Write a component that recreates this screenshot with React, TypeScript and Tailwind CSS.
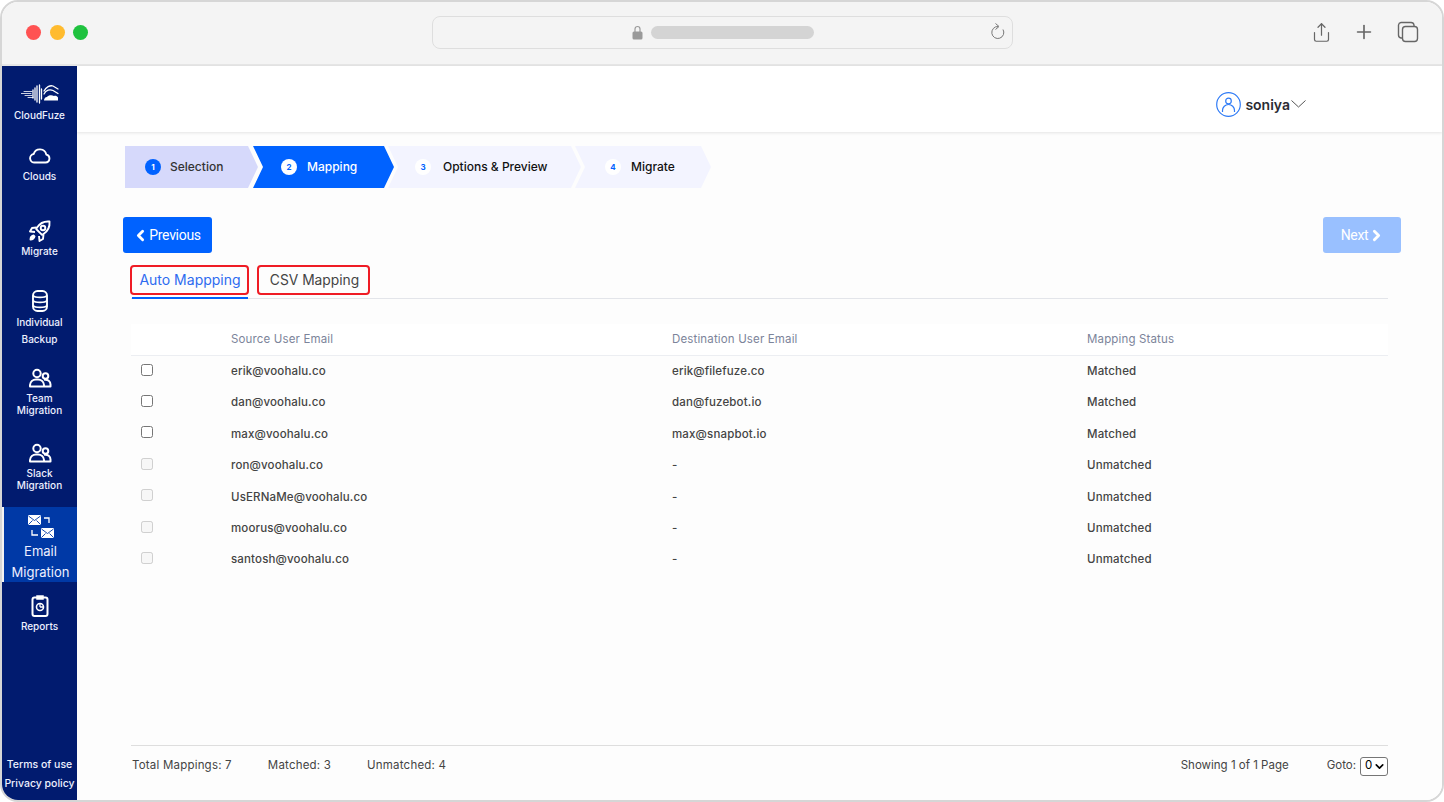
import React from 'react';
import { ChevronLeft, ChevronRight, ChevronDown, Plus, Share } from 'lucide-react';

const ROWS = [
  { source: 'erik@voohalu.co', dest: 'erik@filefuze.co', status: 'Matched' },
  { source: 'dan@voohalu.co', dest: 'dan@fuzebot.io', status: 'Matched' },
  { source: 'max@voohalu.co', dest: 'max@snapbot.io', status: 'Matched' },
  { source: 'ron@voohalu.co', dest: '-', status: 'Unmatched' },
  { source: 'UsERNaMe@voohalu.co', dest: '-', status: 'Unmatched' },
  { source: 'moorus@voohalu.co', dest: '-', status: 'Unmatched' },
  { source: 'santosh@voohalu.co', dest: '-', status: 'Unmatched' },
];

const STEP_BASE = 'flex h-[42px] items-center text-[12px] font-medium';
const CLIP_FIRST = '[clip-path:polygon(0_0,calc(100%-10px)_0,100%_50%,calc(100%-10px)_100%,0_100%)]';
const CLIP_NEXT = '[clip-path:polygon(0_0,calc(100%-10px)_0,100%_50%,calc(100%-10px)_100%,0_100%,10px_50%)]';

const LogoIcon = () => (
  <svg width="38" height="20" viewBox="0 0 38 20" fill="none" stroke="white" strokeWidth="1.100" strokeLinecap="round">
    <path d="M0 9.500h10M3 7.500h8M4 11.500h7M7 13.500h5" strokeWidth="0.800" />
    <path d="M12 6v8M14 4v12M16 2v16M18.500 1v18M20.500 5v10" strokeWidth="1.300" />
    <path d="M23 7c2-4 6-6 9-5l5 3M23 10c2-4 6-5 9-3.500l5 3" strokeWidth="1.300" />
    <path d="M23 16.500h14v-3c-1-2-3-2-4-1.500c-2-1.500-6-1-7 1c-2 0-3 2-3 3.500z" fill="white" stroke="none" />
  </svg>
);

const CloudIcon = () => (
  <svg width="22" height="18" viewBox="0 0 22 18" fill="none" stroke="white" strokeWidth="1.900" strokeLinejoin="round">
    <path d="M6 16.500h10.500a4 4 0 0 0 .8-7.900a6.500 6.500 0 0 0-12.600-.6a4.300 4.300 0 0 0 1.300 8.500z" />
  </svg>
);

const RocketIcon = () => (
  <svg width="24" height="24" viewBox="0 0 24 24" fill="none" stroke="white" strokeWidth="1.900" strokeLinejoin="round">
    <path d="M21.500 2.500c-5.500-.5-9.500 1.500-12.500 6l-.8 1.500l5.800 5.800l1.500-.8c4.500-3 6.500-7 6-12.500z" />
    <circle cx="15" cy="9" r="2.300" />
    <path d="M8.500 8.500L4 9L2 12.500L7 13M15.500 15.500L15 20L11.500 22L11 17" />
    <path d="M5.500 16.500c-1.800.5-3 2.200-3 4c1.800 0 3.500-1.200 4-3z" fill="white" />
  </svg>
);

const DatabaseIcon = () => (
  <svg width="16" height="22" viewBox="0 0 16 22" fill="none" stroke="white" strokeWidth="1.900">
    <rect x="1" y="1" width="14" height="20" rx="4.500" />
    <path d="M1 5.500c2 2.500 12 2.500 14 0M1 10.500c2 2.500 12 2.500 14 0M1 15.500c2 2.500 12 2.500 14 0" />
  </svg>
);

const PeopleIcon = () => (
  <svg width="24" height="24" viewBox="0 0 24 24" fill="none" stroke="white" strokeWidth="2">
    <circle cx="9" cy="7.500" r="3.700" />
    <circle cx="17.500" cy="10" r="2.800" />
    <path d="M2 20.500v-1.500a6 6 0 0 1 6-5.500h2a6 6 0 0 1 6 5.500v1.500zM16 13.800c4-.8 6.500 1.700 6.500 4.700v2h-6.500" strokeLinejoin="round" />
  </svg>
);

const EmailIcon = () => (
  <svg width="26" height="24" viewBox="0 0 26 24" fill="none">
    <rect x="0" y="0" width="13" height="10" rx="1" fill="white" />
    <path d="M0.500 1l6 4.500l6-4.500M0.500 9.500l4-4M12.500 9.500l-4-4" stroke="#0039a6" strokeWidth="0.900" />
    <rect x="13" y="13" width="13" height="10" rx="1" fill="white" />
    <path d="M13.500 14l6 4.500l6-4.500M13.500 22.500l4-4M25.500 22.500l-4-4" stroke="#0039a6" strokeWidth="0.900" />
    <path d="M16 3h5v5M10 20H4v-5" stroke="white" strokeWidth="1.300" />
  </svg>
);

const ReportIcon = () => (
  <svg width="24" height="24" viewBox="0 0 24 24" fill="none" stroke="white" strokeWidth="2">
    <rect x="4.500" y="3.500" width="15" height="18.500" rx="2" />
    <path d="M9 2h6v3H9z" fill="white" strokeWidth="1.500" />
    <circle cx="12" cy="13" r="3.500" strokeWidth="1.600" />
    <path d="M12 13V9.500M12 13h3.500" strokeWidth="1.300" />
  </svg>
);

const NavItem = ({ icon, lines, className, textClass }: { icon: React.ReactNode; lines: string[]; className: string; textClass: string }) => (
  <div className={`flex flex-col items-center ${className}`}>
    <div className="flex h-[24px] items-center justify-center">{icon}</div>
    <div className={`text-center text-[#eef0ff] ${textClass}`}>
      {lines.map(l => <div key={l}>{l}</div>)}
    </div>
  </div>
);

const Sidebar = () => (
  <aside className="flex h-full w-[75px] shrink-0 flex-col bg-[#011b6f] font-['Inter',sans-serif] font-medium">
    <NavItem icon={<LogoIcon />} lines={['CloudFuze']} className="h-[64px] pt-[16px]" textClass="mt-[2px] text-[10px] leading-[14px]" />
    <NavItem icon={<CloudIcon />} lines={['Clouds']} className="h-[70px] pt-[13px]" textClass="mt-[2px] text-[10px] leading-[14px]" />
    <NavItem icon={<RocketIcon />} lines={['Migrate']} className="h-[76px] pt-[19px]" textClass="mt-[1px] text-[10px] leading-[14px]" />
    <NavItem icon={<DatabaseIcon />} lines={['Individual', 'Backup']} className="h-[75px] pt-[13px]" textClass="mt-[1px] text-[10px] leading-[17px]" />
    <NavItem icon={<PeopleIcon />} lines={['Team', 'Migration']} className="h-[80px] pt-[15px]" textClass="mt-[2px] text-[10px] leading-[12px]" />
    <NavItem icon={<PeopleIcon />} lines={['Slack', 'Migration']} className="h-[76px] pt-[10px]" textClass="mt-[2px] text-[10px] leading-[12px]" />
    <NavItem icon={<EmailIcon />} lines={['Email', 'Migration']} className="h-[75px] border-l-[2px] border-[#f2f2f2] bg-[#0039a6] pt-[8px]" textClass="mt-[2px] text-[13px] leading-[21px] font-normal" />
    <NavItem icon={<ReportIcon />} lines={['Reports']} className="h-[70px] pt-[12px]" textClass="mt-[1px] text-[10px] leading-[14px]" />
    <div className="mt-auto pb-[7px] text-center text-[10.500px] leading-[19px] text-[#eef0ff]">
      <div>Terms of use</div>
      <div>Privacy policy</div>
    </div>
  </aside>
);

const BrowserBar = () => (
  <div className="flex h-[64px] shrink-0 items-center border-b-[2px] border-[#e6e6e6] bg-[#f4f4f4] pb-[2px]">
    <div className="flex w-[430px] shrink-0 items-center gap-[8.500px] pl-[24px]">
      <span className="h-[15px] w-[15px] rounded-full bg-[#ff5252]" />
      <span className="h-[15px] w-[15px] rounded-full bg-[#ffbb2e]" />
      <span className="h-[15px] w-[15px] rounded-full bg-[#1fc23f]" />
    </div>
    <div className="flex h-[33px] w-[581px] shrink-0 items-center rounded-[8px] border border-[#dedede] pl-[199px] pr-[7px]">
      <svg width="11" height="15" viewBox="0 0 11 15" fill="none">
        <path d="M3 7V4a2.500 2.500 0 0 1 5 0v3" stroke="#9a9a9a" strokeWidth="1.200" />
        <rect x="0.500" y="6.500" width="10" height="8" rx="1.500" fill="#9a9a9a" />
      </svg>
      <span className="ml-[8px] h-[13px] w-[163px] rounded-full bg-[#d4d4d4]" />
      <svg className="ml-auto" width="16" height="20" viewBox="0 0 16 20" fill="none" stroke="#777" strokeWidth="1">
        <path d="M9 4.500a6 6 0 1 0 5 3" />
        <path d="M6.500 1.500L10 4.500L6.500 7.500" />
      </svg>
    </div>
    <div className="flex flex-1 items-center pl-[298px] text-[#666]">
      <Share size={21} strokeWidth={1.400} />
      <Plus size={22} strokeWidth={1.800} className="ml-[21px]" />
      <svg className="ml-[22px]" width="22" height="22" viewBox="0 0 22 22" fill="none" stroke="#666" strokeWidth="1.400">
        <rect x="5.500" y="5.500" width="15" height="15" rx="3" />
        <path d="M5.500 17H4a3 3 0 0 1-2.500-3V4A3 3 0 0 1 4 1.500h10A3 3 0 0 1 17 4v1.500" />
      </svg>
    </div>
  </div>
);

const Badge = ({ n, active }: { n: number; active?: boolean }) => (
  <span className={`flex h-[16px] w-[16px] shrink-0 items-center justify-center rounded-full text-[8px] font-bold ${active ? 'bg-[#0062ff] text-white' : 'bg-white text-[#0062ff]'}`}>
    {n}
  </span>
);

const Stepper = () => (
  <div className="flex font-['Inter',sans-serif]">
    <div className={`${STEP_BASE} ${CLIP_FIRST} w-[133px] gap-[9px] bg-[#d6d9fb] pl-[20px] text-[#333]`}>
      <Badge n={1} active /> Selection
    </div>
    <div className={`${STEP_BASE} ${CLIP_NEXT} -ml-[5px] w-[141px] gap-[10px] bg-[#0062ff] pl-[28px] text-white`}>
      <Badge n={2} /> Mapping
    </div>
    <div className={`${STEP_BASE} ${CLIP_NEXT} -ml-[6px] w-[193px] gap-[12px] bg-[#f3f4ff] pl-[27px] text-[11.800px] text-[#111]`}>
      <Badge n={3} /> Options &amp; Preview
    </div>
    <div className={`${STEP_BASE} ${CLIP_NEXT} -ml-[6px] w-[136px] gap-[10px] bg-[#f3f4ff] pl-[30px] text-[#111]`}>
      <Badge n={4} /> Migrate
    </div>
  </div>
);

const Tabs = () => (
  <div className="mt-[12px] ml-[6px] mr-[13px] flex gap-[8px] border-b border-[#e3e5ea] font-['Inter',sans-serif] text-[14px]">
    <div className="-ml-[1px] flex flex-col">
      <div className="flex h-[30px] w-[119px] items-center justify-center rounded-[4px] border-[2px] border-[#ef1c25] pb-px pl-px text-[#2d6bf0]">Auto Mappping</div>
      <div className="ml-[2px] mr-[1px] mt-[2px] -mb-px h-[2px] bg-[#0062ff]" />
    </div>
    <div className="flex flex-col">
      <div className="flex h-[30px] w-[113px] items-center justify-center rounded-[4px] border-[2px] border-[#ef1c25] pl-[2px] text-[13.800px] text-[#444]">CSV Mapping</div>
    </div>
  </div>
);

const Table = () => (
  <div className="mt-[25px] ml-[6px] mr-[13px] font-['Inter',sans-serif] text-[11.500px] tracking-[0.15px]">
    <div className="grid h-[32px] grid-cols-[100px_441px_415px_1fr] items-center border-b border-[#eceef2] bg-white text-[#7c849a]">
      <span />
      <span>Source User Email</span>
      <span>Destination User Email</span>
      <span>Mapping Status</span>
    </div>
    {ROWS.map(r => {
      const matched = r.status === 'Matched';
      return (
        <div key={r.source} className="grid h-[31.400px] grid-cols-[100px_441px_415px_1fr] items-center font-medium text-[#444]">
          <div className="-mt-[4px] flex pl-[10px]">
            <input type="checkbox" disabled={!matched} readOnly className="m-0 h-[12px] w-[12px]" />
          </div>
          <span>{r.source}</span>
          <span>{r.dest}</span>
          <span>{r.status}</span>
        </div>
      );
    })}
  </div>
);

const Footer = () => (
  <div className="mt-auto ml-[6px] mr-[13px] flex h-[55px] shrink-0 items-start border-t border-[#dedede] pt-[10px] font-['Inter',sans-serif] text-[11.500px] text-[#444]">
    <div className="flex h-[20px] items-center gap-[36px] pl-[1px] tracking-[0.2px]">
      <span>Total Mappings: 7</span>
      <span>Matched: 3</span>
      <span>Unmatched: 4</span>
    </div>
    <div className="ml-auto flex h-[20px] items-center">
      <span>Showing 1 of 1 Page</span>
      <span className="ml-[38px]">Goto:</span>
      <div className="ml-[4px] flex h-[19px] w-[28px] items-center justify-between rounded-[3px] border border-[#767676] bg-white pl-[4px] pr-[1px] text-black">
        0 <ChevronDown size={13} strokeWidth={3} />
      </div>
    </div>
  </div>
);

export default function App() {
  return (
    <div className="h-[802px] w-[1444px] overflow-hidden bg-white">
      <div className="flex h-full w-full flex-col overflow-hidden rounded-[18px] border-[2px] border-[#d6d6d6]">
        <BrowserBar />
        <div className="flex min-h-0 flex-1">
          <Sidebar />
          <div className="flex min-w-0 flex-1 flex-col bg-[#fdfdfd]">
            <header className="flex h-[66px] shrink-0 items-center justify-end bg-white pt-[10px] pr-[136px] shadow-[0_1px_3px_rgba(0,0,0,0.1)] font-['Inter',sans-serif]">
              <svg width="25" height="25" viewBox="0 0 25 25" fill="none" stroke="#2f7bf6" strokeWidth="1.200">
                <circle cx="12.500" cy="12.500" r="11.800" />
                <circle cx="12.500" cy="9" r="2.800" />
                <path d="M6.500 20v-1.500a6 6 0 0 1 12 0V20" />
              </svg>
              <span className="ml-[4px] text-[14px] font-semibold text-[#2b2b33]">soniya</span>
              <svg className="ml-[1px]" width="15" height="8" viewBox="0 0 15 8" fill="none" stroke="#555" strokeWidth="1">
                <path d="M0.500 0.500L7.500 7L14.500 0.500" />
              </svg>
            </header>
            <main className="flex min-h-0 flex-1 flex-col pl-[48px] pr-[41px] pt-[14px]">
              <Stepper />
              <div className="mt-[29px] flex justify-between font-['Roboto',sans-serif] text-[14px] tracking-[-0.3px] text-white">
                <button className="-ml-[2px] flex h-[36px] w-[89px] items-center justify-center rounded-[3px] bg-[#0062ff] pr-[2px]">
                  <ChevronLeft size={17} strokeWidth={4} />
                  Previous
                </button>
                <button className="flex h-[36px] w-[78px] items-center justify-center rounded-[3px] bg-[#99c0ff] pl-[2px]">
                  Next
                  <ChevronRight size={17} strokeWidth={4} />
                </button>
              </div>
              <Tabs />
              <Table />
              <Footer />
            </main>
          </div>
        </div>
      </div>
    </div>
  );
}
